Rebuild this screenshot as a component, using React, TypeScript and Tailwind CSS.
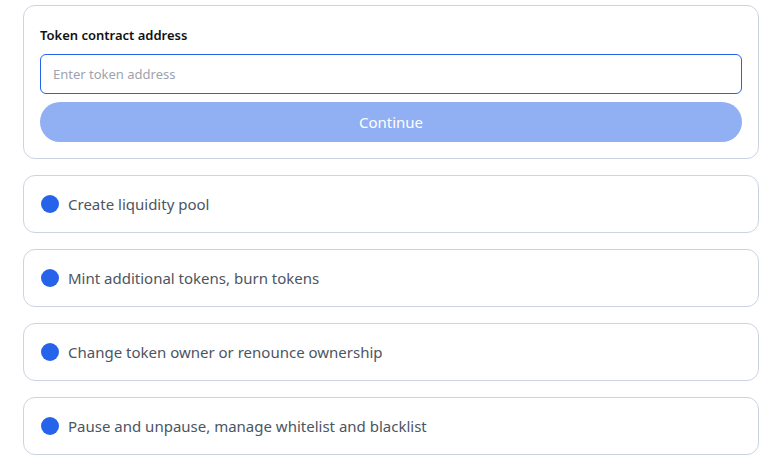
const items = [
  'Create liquidity pool',
  'Mint additional tokens, burn tokens',
  'Change token owner or renounce ownership',
  'Pause and unpause, manage whitelist and blacklist',
];

export default function App() {
  return (
    <div
      className="min-h-screen bg-white px-[23px] pt-[5px] flex flex-col gap-4"
      style={{ fontFamily: '"Noto Sans", "Open Sans", sans-serif' }}
    >
      <div className="rounded-xl border border-[#cdd3e3] px-4 pt-[19px] pb-4">
        <label className="block text-[13px] font-semibold text-[#111] leading-5">Token contract address</label>
        <input
          className="mt-[9px] w-full h-10 rounded-md border border-[#2563eb] px-3 text-[13px] outline-none placeholder:text-[#9ca3af]"
          placeholder="Enter token address"
        />
        <button className="mt-2 w-full h-10 rounded-full bg-[#91aff3] text-white text-[15px]">Continue</button>
      </div>
      {items.map((t) => (
        <div key={t} className="h-[58px] rounded-xl border border-[#cdd3e3] pl-[17px] pr-4 flex items-center gap-[9px]">
          <span className="w-[18px] h-[18px] rounded-full bg-[#2563eb] shrink-0" />
          <span className="text-[15px] text-[#4b5563]">{t}</span>
        </div>
      ))}
    </div>
  );
}
